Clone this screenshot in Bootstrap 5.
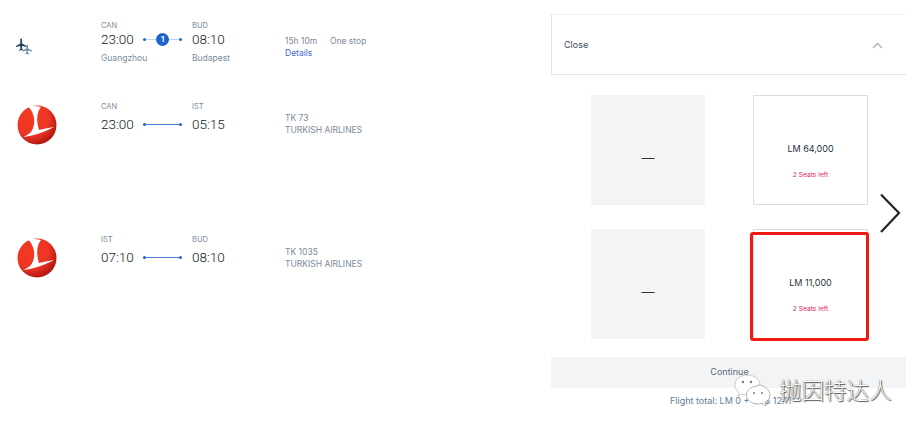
<!DOCTYPE html>
<html lang="en"><head><meta charset="utf-8"><title>Flight fares</title>
<link href="https://cdn.jsdelivr.net/npm/bootstrap@5.3.0/dist/css/bootstrap.min.css" rel="stylesheet">
<style>
html,body{height:432px;overflow:hidden;background:#fff}
body{font-family:Inter,"Liberation Sans",sans-serif;color:#1b2733;position:relative}
.page-wrap{width:906px;height:432px}
.flights{width:551px}
.f-row{padding-top:21px}
.f-row.r1{height:81px}
.f-row.r2{height:133px}
.logo-cell{width:101px;flex:none}
.stop-cell{width:91px;flex:none}
.stop-cell.last{width:93px}
.code{font-size:7.5px;line-height:10px;color:#7a8c9d;height:10px}
.time-line{height:20px;margin-top:2px}
.r1 .time-line{margin-top:-2px}
.clock{font-family:Roboto,"Liberation Sans",sans-serif;font-size:13.5px;font-weight:300;line-height:20px;width:42px;flex:none;color:#111a24}
.conn{width:39px;height:1px;background:#4a80d2;position:relative;flex:none}
.conn.soft{background:#bcd3f1}
.conn::before,.conn::after{content:"";position:absolute;top:-1px;width:3px;height:3px;border-radius:50%;background:#1f66c6}
.conn::before{left:0}.conn::after{right:0}
.stop-num{position:absolute;left:13px;top:-6px;width:13px;height:13px;border-radius:50%;background:#1d66c9;color:#fff;font-size:7.5px;font-weight:700;line-height:13px;text-align:center}
.city{font-size:8.5px;line-height:12px;color:#7a8c9d;margin-top:3px}
.info{font-size:8.5px;line-height:11.5px;color:#7d8b98}
.info-a{padding-top:15px}
.info-b{padding-top:11px}
.info-c{padding-top:12px}
.info a{color:#4a68c8;text-decoration:none}
.dur{width:45px}
.plane-svg{margin:17px 0 0 16px;display:block}
.tk-logo{display:block;margin:3px 0 0 17px}
.fare-panel{width:355px;padding-top:14px}
.close-bar{height:61px;border:1px solid #e2e3e5;border-top-color:#f0f0f1;border-right:0;padding:0 23px 0 12px;font-size:9px;color:#3a4a5a}
.close-chev{margin-top:2px}
.tiles{padding:20px 0 0 40px;gap:24px 48px;display:grid;grid-template-columns:114px 115px}
.tile{height:110px}
.tile-none{background:#f3f4f6;font-size:13px;color:#333;padding-top:18px}
.tile-fare{border:1px solid #dcdcde;background:#fff;padding-top:47px}
.price{font-size:9px;line-height:12px;color:#26323e}
.seats{font-size:6.7px;line-height:10px;color:#d92a55;margin-top:15px}
.go-bar{height:31px;background:#f3f4f6;margin-top:18px;font-size:9px;color:#5a6876;padding-top:8px;padding-left:2px}
.total{font-size:9px;line-height:12px;color:#5f7d95;margin-top:7px;padding-left:119px}
.pick-box{position:absolute;left:750px;top:232px;width:119px;height:109px;border:3px solid #f01a14;border-radius:3px}
.next-arrow{position:absolute;left:878px;top:192px}
.mark-wrap{position:absolute;left:734px;top:374px;gap:7px}
.mark-text{font-family:"Noto Sans CJK SC",sans-serif;font-size:22.5px;font-weight:300;line-height:30px;color:#fff;text-shadow:0 0 1px #333,1px 1px 1px #555}
</style></head><body>
<div class="page-wrap d-flex">
  <div class="flights">
    <div class="f-row r1 d-flex">
      <div class="logo-cell">
        <svg class="plane-svg" width="17" height="18" viewBox="0 0 17 18" aria-hidden="true">
          <path fill="#24435f" d="M5.200 0.500c.6 0 .9.700.9 1.500V5.600l4.700 2.300v1.100L6.100 7.900v3l1.400 1v.8l-2.300-.6-2.300.6v-.8l1.400-1v-3L0 9v-1.100L4.300 5.600V2c0-.8.300-1.500.9-1.500z"/>
          <path fill="#6d8aa5" d="M11.200 6.500c.4 0 .7.600.7 1.300v2.700l4.100 2v1l-4.100-1v2.500l1.200.8v.7l-1.900-.5-1.900.5v-.7l1.200-.8V12.500l-4 1v-1l4-2V7.800c0-.7.300-1.300.7-1.300z"/>
        </svg>
      </div>
      <div class="stop-cell">
        <div class="code">CAN</div>
        <div class="time-line d-flex align-items-center"><span class="clock">23:00</span><span class="conn soft"><span class="stop-num">1</span></span></div>
        <div class="city">Guangzhou</div>
      </div>
      <div class="stop-cell last">
        <div class="code">BUD</div>
        <div class="time-line d-flex align-items-center"><span class="clock">08:10</span></div>
        <div class="city">Budapest</div>
      </div>
      <div class="info info-a">
        <div class="d-flex"><span class="dur">15h 10m</span><span>One stop</span></div>
        <a href="#">Details</a>
      </div>
    </div>
    <div class="f-row r2 d-flex">
      <div class="logo-cell">
        <svg class="tk-logo" width="40" height="40" viewBox="0 0 40 40" aria-hidden="true">
          <defs><radialGradient id="tkred" cx="38%" cy="35%" r="70%"><stop offset="0" stop-color="#f23a22"/><stop offset=".6" stop-color="#ee3524"/><stop offset="1" stop-color="#a8140f"/></radialGradient>
          <symbol id="tkmark" viewBox="0 0 40 40"><circle cx="20" cy="20" r="19.500" fill="url(#tkred)"/><path fill="#fff" d="M11 1C15 .5 20 1 24 2.300 20.500 6 18.500 14 22 25 26 24 31 23 37 22 28 27 16 31 6 32 10 30.500 13 28.500 14.300 26.600 18.500 20 19 10 11 1z"/></symbol></defs>
          <use href="#tkmark"/>
        </svg>
      </div>
      <div class="stop-cell">
        <div class="code">CAN</div>
        <div class="time-line d-flex align-items-center"><span class="clock">23:00</span><span class="conn"></span></div>
      </div>
      <div class="stop-cell last">
        <div class="code">IST</div>
        <div class="time-line d-flex align-items-center"><span class="clock">05:15</span></div>
      </div>
      <div class="info info-b"><div>TK 73</div><div>TURKISH AIRLINES</div></div>
    </div>
    <div class="f-row d-flex">
      <div class="logo-cell"><svg class="tk-logo" width="40" height="40" viewBox="0 0 40 40" aria-hidden="true"><use href="#tkmark"/></svg></div>
      <div class="stop-cell">
        <div class="code">IST</div>
        <div class="time-line d-flex align-items-center"><span class="clock">07:10</span><span class="conn"></span></div>
      </div>
      <div class="stop-cell last">
        <div class="code">BUD</div>
        <div class="time-line d-flex align-items-center"><span class="clock">08:10</span></div>
      </div>
      <div class="info info-c"><div>TK 1035</div><div>TURKISH AIRLINES</div></div>
    </div>
  </div>
  <div class="fare-panel">
    <div class="close-bar d-flex align-items-center justify-content-between">
      <span>Close</span>
      <svg class="close-chev" width="11" height="7" viewBox="0 0 11 7" aria-hidden="true"><path d="M1 6l4.500-4.500L10 6" fill="none" stroke="#b4b4b4" stroke-width="1.500"/></svg>
    </div>
    <div class="tiles">
      <div class="tile tile-none d-flex align-items-center justify-content-center">—</div>
      <div class="tile tile-fare text-center"><div class="price">LM 64,000</div><div class="seats">2 Seats left</div></div>
      <div class="tile tile-none d-flex align-items-center justify-content-center">—</div>
      <div class="tile tile-fare text-center"><div class="price">LM 11,000</div><div class="seats">2 Seats left</div></div>
    </div>
    <div class="go-bar text-center">Continue</div>
    <div class="total">Flight total: LM 0 + US$ 12.11</div>
  </div>
</div>
<div class="pick-box"></div>
<svg class="next-arrow" width="24" height="42" viewBox="0 0 24 42" aria-hidden="true"><path d="M3 2.500l18 18.500L3 40" fill="none" stroke="#222" stroke-width="2.200"/></svg>
<div class="mark-wrap d-flex">
  <svg width="38" height="34" viewBox="0 0 38 34" aria-hidden="true">
    <path fill="#fff" stroke="#aaa" stroke-width=".6" d="M13 1C6 1 1 5.500 1 11c0 3 1.500 5.700 4 7.500L4 22l4-2c1.500.500 3 .700 5 .700 7 0 13-4.500 13-10S20 1 13 1z"/>
    <path fill="#fff" stroke="#888" stroke-width=".6" d="M24 12c-6.500 0-11.500 4-11.500 9s5 9 11.500 9c1.500 0 3-.2 4-.6l4 2.600-1-3.600c3-1.700 5-4.400 5-7.400 0-5-5.500-10-12-10z"/>
    <circle cx="9" cy="8" r="1.200" fill="#777"/><circle cx="17" cy="8" r="1.200" fill="#777"/>
    <circle cx="20" cy="19" r="1" fill="#777"/><circle cx="28" cy="19" r="1" fill="#777"/>
  </svg>
  <span class="mark-text">抛因特达人</span>
</div>
<script src="https://cdn.jsdelivr.net/npm/bootstrap@5.3.0/dist/js/bootstrap.bundle.min.js"></script>
</body></html>
